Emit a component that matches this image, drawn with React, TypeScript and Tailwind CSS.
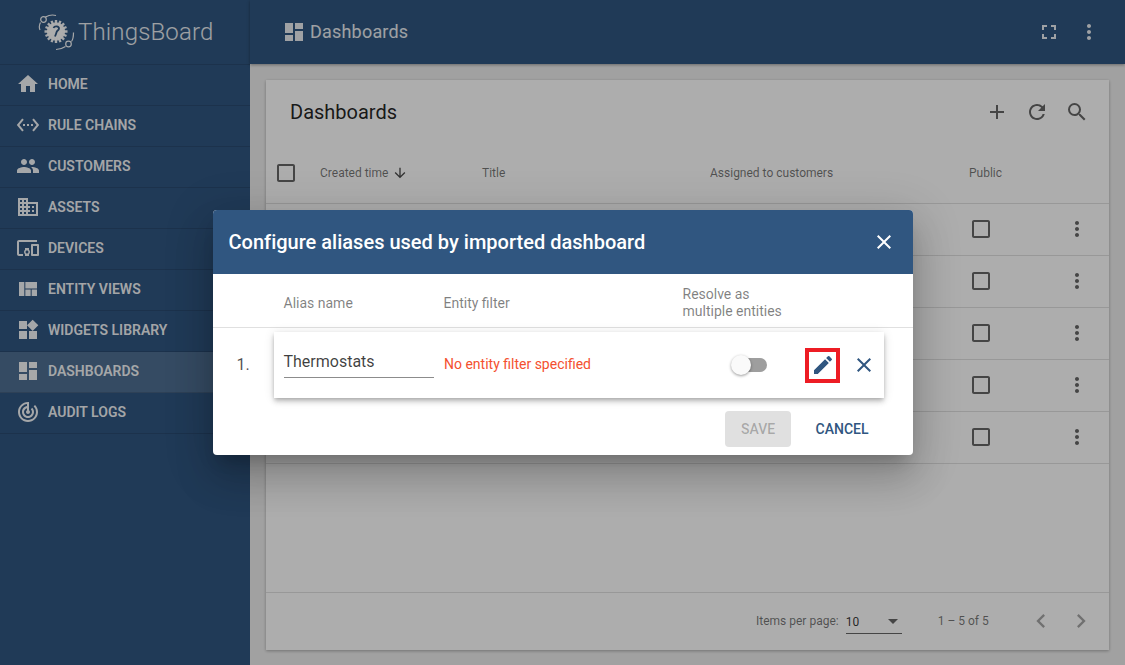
import React from 'react';
import {
  MdHome, MdSettingsEthernet, MdPeople, MdDomain, MdDevicesOther, MdViewQuilt, MdWidgets, MdDashboard,
  MdTrackChanges, MdFullscreen, MdMoreVert, MdAdd, MdRefresh, MdSearch, MdArrowDownward, MdClose, MdEdit,
  MdChevronLeft, MdChevronRight, MdCheckBoxOutlineBlank,
} from 'react-icons/md';

const menu = [
  { label: 'HOME', icon: MdHome },
  { label: 'RULE CHAINS', icon: MdSettingsEthernet },
  { label: 'CUSTOMERS', icon: MdPeople },
  { label: 'ASSETS', icon: MdDomain },
  { label: 'DEVICES', icon: MdDevicesOther },
  { label: 'ENTITY VIEWS', icon: MdViewQuilt },
  { label: 'WIDGETS LIBRARY', icon: MdWidgets },
  { label: 'DASHBOARDS', icon: MdDashboard, active: true },
  { label: 'AUDIT LOGS', icon: MdTrackChanges },
];

const Logo = () => (
  <svg width="38" height="38" viewBox="0 0 38 38" fill="none" className="shrink-0 text-white/95">
    {/* gear */}
    <circle cx="18" cy="18.500" r="9.200" fill="currentColor" />
    <path
      d="M18 7v23M6.500 18.500h23M9.900 10.400l16.200 16.200M26.100 10.400 9.900 26.600M13.500 7.900l9 21.200M22.500 7.900l-9 21.200M7.500 14l21 9M28.500 14l-21 9"
      stroke="currentColor"
      strokeWidth="2.400"
    />
    <path d="M15.500 15c1-2.500 5.500-2 5.500.5 0 2-2.500 2-2.500 4l-1.500 4" stroke="#305680" strokeWidth="1.800" />
    {/* orbits */}
    <circle cx="5.500" cy="6.500" r="2.800" stroke="currentColor" strokeWidth="1.200" />
    <circle cx="30.500" cy="31" r="2.800" stroke="currentColor" strokeWidth="1.200" />
    <path
      d="M7.500 4C11 2 14.500 1.500 18 2.500M2.500 9.500C1 12 1 14.500 2 17M27.500 33.500c-3 2-6 3-9.500 3M33.500 28.500c1.500-2 2-5 2-9"
      stroke="currentColor"
      strokeWidth="1.200"
    />
  </svg>
);

const Sidebar = () => (
  <aside className="w-[250px] shrink-0 bg-[#305680] text-white/95 flex flex-col">
    <div className="h-[65px] flex items-center pl-[38px] border-b border-black/12">
      <Logo />
      <span className="ml-0.5 text-2xl font-light tracking-[0.15px] text-white/90">ThingsBoard</span>
    </div>
    {menu.map((m) => (
      <div
        key={m.label}
        className={`h-[41px] flex items-center pl-4 pb-[2px] border-b border-black/12 ${m.active ? 'bg-white/15' : ''}`}
      >
        <m.icon size={24} className="shrink-0" />
        <span className="ml-2 text-sm font-semibold">{m.label}</span>
      </div>
    ))}
  </aside>
);

const grid = 'grid grid-cols-[54px_162px_228px_259px_1fr] items-center';

const Main = () => (
  <main className="flex-1 flex flex-col min-w-0 bg-[#eeeeee]">
    <header className="h-[64px] shrink-0 bg-[#305680] text-white/90 flex items-center pl-[32px] pr-[24px] shadow-[0_1px_3px_rgba(0,0,0,0.35)]">
      <MdDashboard size={24} />
      <span className="ml-1 text-lg tracking-[0.2px]">Dashboards</span>
      <MdFullscreen size={24} className="ml-auto" />
      <MdMoreVert size={24} className="ml-4" />
    </header>
    <div className="flex-1 p-4 pb-[15px] min-h-0">
      <section className="h-full bg-white shadow-[0_1px_3px_rgba(0,0,0,0.3)] flex flex-col">
        <div className="h-[64px] shrink-0 flex items-center pl-6 pr-5 text-black/87">
          <h1 className="text-xl">Dashboards</h1>
          <div className="ml-auto flex gap-4 text-black/60">
            <MdAdd size={24} />
            <MdRefresh size={24} />
            <MdSearch size={24} />
          </div>
        </div>
        <div className={`${grid} h-[60px] pb-0.5 shrink-0 text-xs text-black/55 border-b border-black/12`}>
          <MdCheckBoxOutlineBlank size={24} className="ml-2 text-black/60" />
          <div className="flex items-center gap-1">
            Created time <MdArrowDownward size={16} className="text-black/70" />
          </div>
          <div>Title</div>
          <div>Assigned to customers</div>
          <div>Public</div>
        </div>
        <div className="flex-1 min-h-0">
          {[0, 1, 2, 3, 4].map((i) => (
            <div key={i} className={`${grid} h-[52px] pb-px border-b border-black/12`}>
              <div />
              <div />
              <div />
              <div />
              <div className="flex items-center justify-between pr-5 text-black/60">
                <MdCheckBoxOutlineBlank size={24} />
                <MdMoreVert size={24} />
              </div>
            </div>
          ))}
        </div>
        <div className="h-[58px] shrink-0 border-t border-black/12 flex items-center pl-[490px] pb-[2px] text-xs text-black/55">
          <span>Items per page:</span>
          <div className="ml-[7px] w-[56px] h-[24px] mt-[3px] flex items-center justify-between border-b border-black/60 text-black/80">
            <span>10</span>
            <span className="mr-1 w-0 h-0 border-x-[5px] border-x-transparent border-t-[5px] border-t-black/60" />
          </div>
          <span className="ml-9">1 – 5 of 5</span>
          <MdChevronLeft size={28} className="ml-[38px] text-black/35" />
          <MdChevronRight size={28} className="ml-3 text-black/35" />
        </div>
      </section>
    </div>
  </main>
);

const Dialog = () => (
  <div className="w-[700px] h-[245px] bg-white rounded overflow-hidden flex flex-col shadow-[0_11px_15px_-7px_rgba(0,0,0,0.2),0_24px_38px_3px_rgba(0,0,0,0.14),0_9px_46px_8px_rgba(0,0,0,0.12)]">
    <div className="h-[64px] shrink-0 bg-[#305680] text-white flex items-center pl-4 pr-[17px]">
      <h2 className="text-xl font-medium tracking-[0.01px]">Configure aliases used by imported dashboard</h2>
      <MdClose size={24} className="ml-auto" />
    </div>
    <div className="h-[54px] shrink-0 pt-1 border-b border-[#e0e0e0] grid grid-cols-[71px_160px_239px_1fr] items-center text-sm text-black/50">
      <div />
      <div>Alias name</div>
      <div>Entity filter</div>
      <div className="leading-[17px]">
        Resolve as
        <br />
        multiple entities
      </div>
    </div>
    <div className="flex items-center mt-1 pl-6 pr-[29px]">
      <span className="w-[37px] text-base text-black/70">1.</span>
      <div className="flex-1 h-[66px] flex items-center pl-2.5 shadow-[0_2px_4px_-1px_rgba(0,0,0,0.2),0_4px_5px_0_rgba(0,0,0,0.14),0_1px_10px_0_rgba(0,0,0,0.12)]">
        <div className="w-[150px] h-[36px] mb-[11px] pt-[5px] border-b border-black/45 flex items-center text-base text-black/75">
          Thermostats
        </div>
        <span className="ml-[10.5px] mb-0.5 w-[288.5px] text-sm text-[#f4502f]">No entity filter specified</span>
        <div className="relative w-[34px] h-[14px] rounded-full bg-[#9e9e9e]">
          <div className="absolute -left-0.5 -top-[3px] w-5 h-5 rounded-full bg-[#fafafa] shadow-[0_1px_3px_rgba(0,0,0,0.4)]" />
        </div>
        <div className="ml-[38px] w-[35px] h-[35px] border-[4px] border-[#ed1c24] flex items-center justify-center text-[#305680]">
          <MdEdit size={24} className="shrink-0 ml-px" />
        </div>
        <MdClose size={24} className="ml-3 text-[#305680]" />
      </div>
    </div>
    <div className="flex items-center justify-end mt-[13px] pr-[44px] text-sm font-medium">
      <div className="w-[66px] h-[36px] pl-px rounded bg-[#e0e0e0] text-black/26 flex items-center justify-center">SAVE</div>
      <div className="ml-[25px] text-[#305680]">CANCEL</div>
    </div>
  </div>
);

export default function App() {
  return (
    <div className="relative w-[1125px] h-[665px] overflow-hidden flex font-['Roboto',sans-serif]">
      <Sidebar />
      <Main />
      <div className="absolute inset-0 bg-black/32 flex items-center justify-center">
        <Dialog />
      </div>
    </div>
  );
}
